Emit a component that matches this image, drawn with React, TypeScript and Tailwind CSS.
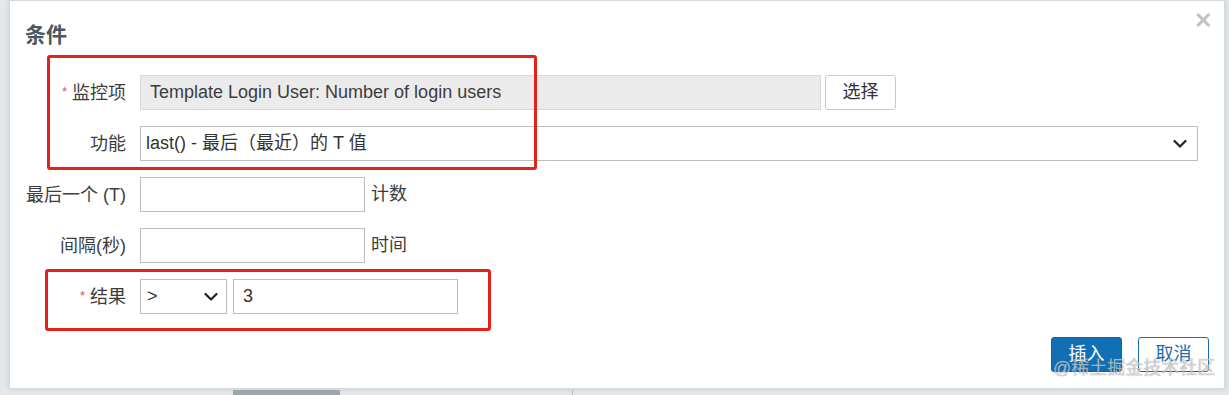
import React from "react";

const font = { fontFamily: '"Liberation Sans", "Noto Sans CJK SC", sans-serif' };

function Chevron() {
  return (
    <svg width="14" height="10" viewBox="0 0 14 10" fill="none">
      <path d="M1.5 2l5.5 5.5L12.5 2" stroke="#222" strokeWidth="2.2" strokeLinecap="round" strokeLinejoin="round" />
    </svg>
  );
}

function Label({ text, required }: { text: string; required?: boolean }) {
  return (
    <div className="w-[116px] shrink-0 text-right text-[18px] text-[#3d3d3d] leading-none whitespace-nowrap">
      {required && <span className="text-[#d9534f] text-[13px] mr-[5px] align-top relative top-[1px]">*</span>}
      {text}
    </div>
  );
}

export default function App() {
  return (
    <div className="w-[1229px] h-[395px] bg-[#e4e8ea] relative overflow-hidden" style={font}>
      <div className="absolute left-[9px] top-0 w-[1216px] h-[389px] bg-white border border-[#d6d9db] shadow-[0_0_6px_rgba(0,0,0,0.12)]">
        {/* header */}
        <div className="flex justify-between items-start pl-[15px] pr-[12px] pt-[21px]">
          <h2 className="text-[21px] font-bold text-[#4b5762] leading-[25px]">条件</h2>
          <span className="text-[#c2c2c2] text-[22px] font-bold leading-none -mt-[12px]">✕</span>
        </div>

        {/* form */}
        <div className="flex flex-col gap-[16px] mt-[28px]">
          <div className="flex items-center h-[35px]">
            <Label text="监控项" required />
            <div className="ml-[14px] w-[681px] h-[35px] bg-[#ebebeb] border border-[#d8d8d8] flex items-center pl-[9px] text-[18px] text-[#3d3d3d] whitespace-nowrap">
              Template Login User: Number of login users
            </div>
            <button className="ml-[4px] w-[71px] h-[35px] bg-white border border-[#c9c9c9] rounded-[3px] text-[18px] text-[#333]">
              选择
            </button>
          </div>

          <div className="flex items-center h-[35px]">
            <Label text="功能" />
            <div className="ml-[14px] w-[1058px] h-[35px] border border-[#bdbdbd] flex items-center justify-between pl-[5px] pr-[10px] text-[18px] text-[#333] whitespace-nowrap">
              <span>last() - 最后（最近）的 T 值</span>
              <Chevron />
            </div>
          </div>

          <div className="flex items-center h-[35px]">
            <Label text="最后一个 (T)" />
            <div className="ml-[14px] w-[225px] h-[35px] border border-[#bdbdbd]" />
            <span className="ml-[6px] text-[18px] text-[#3d3d3d]">计数</span>
          </div>

          <div className="flex items-center h-[35px]">
            <Label text="间隔(秒)" />
            <div className="ml-[14px] w-[225px] h-[35px] border border-[#bdbdbd]" />
            <span className="ml-[6px] text-[18px] text-[#3d3d3d]">时间</span>
          </div>

          <div className="flex items-center h-[35px]">
            <Label text="结果" required />
            <div className="ml-[14px] w-[87px] h-[35px] border border-[#bdbdbd] flex items-center justify-between pl-[6px] pr-[8px] text-[18px] text-[#333]">
              <span>&gt;</span>
              <Chevron />
            </div>
            <div className="ml-[6px] w-[225px] h-[35px] border border-[#bdbdbd] flex items-center pl-[9px] text-[18px] text-[#333]">
              3
            </div>
          </div>
        </div>

        {/* footer */}
        <div className="absolute right-[15px] top-[336px] flex gap-[16px]">
          <button className="w-[71px] h-[35px] bg-[#1170b5] border border-[#0e63a1] rounded-[3px] text-white text-[18px]">插入</button>
          <button className="w-[71px] h-[35px] bg-white border border-[#1b6ea8] rounded-[3px] text-[#1b6ea8] text-[18px]">取消</button>
        </div>

        {/* annotations */}
        <div className="absolute left-[37px] top-[54px] w-[490px] h-[115px] border-[3px] border-[#e2231a] rounded-[3px] pointer-events-none" />
        <div className="absolute left-[35px] top-[268px] w-[446px] h-[62px] border-[3px] border-[#e2231a] rounded-[3px] pointer-events-none" />

        <div className="absolute left-[1043px] top-[355px] whitespace-nowrap text-[18px] leading-[24px] text-[rgba(255,255,255,0.55)] [text-shadow:0_0_1px_rgba(90,90,90,0.7)] pointer-events-none">
          @稀土掘金技术社区
        </div>
      </div>

      {/* page behind */}
      <div className="absolute left-[233px] top-[390px] w-[107px] h-[5px] bg-[#9ba6ad]" />
      <div className="absolute left-[572px] top-[390px] w-[1px] h-[5px] bg-[#b5bbbf]" />
    </div>
  );
}
